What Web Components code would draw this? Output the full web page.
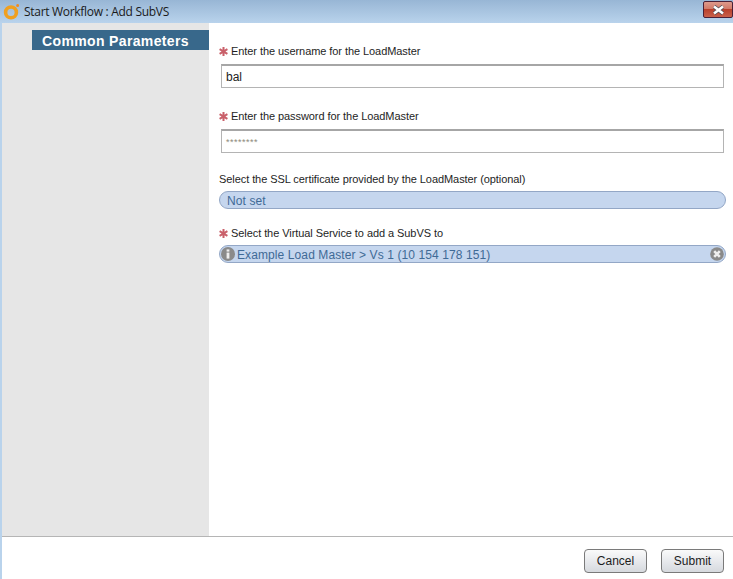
<!DOCTYPE html>
<html>
<head>
<meta charset="utf-8">
<title>Start Workflow : Add SubVS</title>
<style>
  html, body { margin: 0; height: 100%; }
  body { font-family: "Liberation Sans", Arial, sans-serif; overflow: hidden; }
</style>
</head>
<body>
<wf-dialog heading="Start Workflow : Add SubVS">
  <wf-field label="Enter the username for the LoadMaster" required style="height:65px">
    <wf-input value="bal" style="margin-top:1px"></wf-input>
  </wf-field>
  <wf-field label="Enter the password for the LoadMaster" required style="height:63px">
    <wf-input value="********" secret></wf-input>
  </wf-field>
  <wf-field label="Select the SSL certificate provided by the LoadMaster (optional)" style="height:54px">
    <wf-pill text="Not set"></wf-pill>
  </wf-field>
  <wf-field label="Select the Virtual Service to add a SubVS to" required>
    <wf-pill text="Example Load Master &gt; Vs 1 (10 154 178 151)" info clear></wf-pill>
  </wf-field>
</wf-dialog>

<script>
// Title bar of the window, with logo and red close button
class WfTitlebar extends HTMLElement {
  constructor() {
    super();
    this.attachShadow({ mode: 'open' });
  }
  connectedCallback() {
    this.shadowRoot.innerHTML = `
      <style>
        :host {
          display: flex; align-items: center; height: 23px; box-sizing: border-box;
          background: linear-gradient(#98b6d5, #b9d3ec);
          font: 12px "Open Sans", "Noto Sans", sans-serif; color: #1a1a1a;
        }
        svg.logo { margin: 0 0 0 3px; flex: none; }
        span { margin-left: 5px; flex: 1; letter-spacing: -0.3px; }
        .close {
          width: 30px; height: 17px; margin: -4px 0 0 0; box-sizing: border-box;
          border: 1px solid #4a2036; border-radius: 2px;
          background: linear-gradient(#dd9a8c 0, #d27a68 45%, #b8402c 50%, #c9604a 100%);
          display: flex; align-items: center; justify-content: center;
        }
      </style>
      <svg class="logo" width="16" height="16" viewBox="0 0 16 16">
        <circle cx="8" cy="8.4" r="5.4" fill="none" stroke="#f0a020" stroke-width="3.6"/>
        <circle cx="14.6" cy="1.6" r="1.5" fill="#f08a20"/>
      </svg>
      <span>${this.getAttribute('heading')}</span>
      <div class="close">
        <svg width="13" height="10" viewBox="0 0 13 10">
          <path d="M2 1.5L11 8.5M11 1.5L2 8.5" stroke="#4b4b55" stroke-width="4"/>
          <path d="M2 1.5L11 8.5M11 1.5L2 8.5" stroke="#fff" stroke-width="2.6"/>
        </svg>
      </div>`;
  }
}

class WfButton extends HTMLElement {
  constructor() {
    super();
    this.attachShadow({ mode: 'open' });
    this.shadowRoot.innerHTML = `
      <style>
        :host {
          display: flex; align-items: center; justify-content: center;
          width: 63px; height: 24px; box-sizing: border-box;
          border: 1px solid #7a7a7a; border-radius: 4px;
          background: linear-gradient(#fafafa, #e4e6ea 60%, #d6d9de);
          font: 12px "Liberation Sans", sans-serif; color: #1c1c1c;
        }
      </style>
      <slot></slot>`;
  }
}

class WfInput extends HTMLElement {
  constructor() {
    super();
    this.attachShadow({ mode: 'open' });
  }
  connectedCallback() {
    const secret = this.hasAttribute('secret');
    this.shadowRoot.innerHTML = `
      <style>
        :host {
          display: flex; align-items: center; box-sizing: border-box;
          height: 24px; margin: 0 9px 0 2px; padding: 1px 0 0 4px;
          border: 1px solid #b4b4b4; border-top: 2px solid #a6a6a6;
          background: #fff; color: #222;
          font: 12px "Liberation Sans", sans-serif;
        }
        .secret { font-size: 9px; color: #8d8a78; letter-spacing: 0.5px; }
      </style>
      <span class="${secret ? 'secret' : ''}">${this.getAttribute('value')}</span>`;
  }
}

// Selected value as a blue rounded bar
class WfPill extends HTMLElement {
  constructor() {
    super();
    this.attachShadow({ mode: 'open' });
  }
  connectedCallback() {
    const info = this.hasAttribute('info') ? `
      <svg class="info" width="14" height="14" viewBox="0 0 14 14">
        <circle cx="7" cy="7" r="7" fill="#8a8a8a"/>
        <rect x="5.6" y="2.4" width="2.8" height="2.2" fill="#eee"/>
        <rect x="5.6" y="5.6" width="2.8" height="6" fill="#eee"/>
      </svg>` : '';
    const clear = this.hasAttribute('clear') ? `
      <svg class="clear" width="14" height="14" viewBox="0 0 14 14">
        <circle cx="7" cy="7" r="6.8" fill="#8a8a8a"/>
        <path d="M4.2 4.2L9.8 9.8M9.8 4.2L4.2 9.8" stroke="#eee" stroke-width="2.6"/>
      </svg>` : '';
    this.shadowRoot.innerHTML = `
      <style>
        :host {
          display: flex; align-items: center; box-sizing: border-box;
          height: 18px; margin: -1px 7px 0 0; padding: 0 1px 0 7px;
          border: 1px solid #93a7c6; border-radius: 9px;
          background: #c5d6ee; color: #3f6a96;
          font: 12px "Liberation Sans", sans-serif; letter-spacing: 0.1px;
        }
        :host([info]) { padding-left: 1px; }
        .info { margin-right: 2px; flex: none; }
        span { flex: 1; padding-top: 1px; }
        .clear { flex: none; }
      </style>
      ${info}<span>${this.getAttribute('text')}</span>${clear}`;
  }
}

// Label with optional red star above a control
class WfField extends HTMLElement {
  constructor() {
    super();
    this.attachShadow({ mode: 'open' });
  }
  connectedCallback() {
    const star = this.hasAttribute('required') ? `
      <svg width="9" height="9" viewBox="0 0 9 9">
        <path d="M4.5 0V9M0.6 2.2L8.4 6.8M8.4 2.2L0.6 6.8" stroke="#c9606a" stroke-width="2"/>
      </svg>` : '';
    this.shadowRoot.innerHTML = `
      <style>
        :host { display: block; }
        .label {
          display: flex; align-items: center; gap: 3px; height: 14px; margin-bottom: 6px;
          font: 11px "Liberation Sans", sans-serif; color: #1e1e1e; letter-spacing: -0.07px;
        }
        svg { flex: none; }
      </style>
      <div class="label">${star}<span>${this.getAttribute('label')}</span></div>
      <slot></slot>`;
  }
}

class WfDialog extends HTMLElement {
  constructor() {
    super();
    this.attachShadow({ mode: 'open' });
  }
  connectedCallback() {
    this.shadowRoot.innerHTML = `
      <style>
        :host {
          display: flex; flex-direction: column; height: 579px; width: 733px;
          background: #fff; border-left: 2px solid #b9d3ec; box-sizing: border-box;
        }
        wf-titlebar { margin-left: -2px; }
        .body { flex: 1; display: flex; min-height: 0; }
        .side { width: 207px; flex: none; background: #e6e6e6; padding: 7px 0 0 30px; box-sizing: border-box; }
        .side div {
          height: 20px; background: #38688b; color: #fff; padding-left: 10px;
          font: bold 14px/22px "Liberation Sans", sans-serif; letter-spacing: 0.36px;
        }
        .main { flex: 1; padding: 21px 0 0 10px; }
        .foot {
          height: 43px; flex: none; border-top: 1px solid #b5b5b5;
          display: flex; justify-content: flex-end; align-items: flex-start;
          gap: 14px; padding: 12px 9px 0 0; box-sizing: border-box;
        }
      </style>
      <wf-titlebar heading="${this.getAttribute('heading')}"></wf-titlebar>
      <div class="body">
        <div class="side"><div>Common Parameters</div></div>
        <div class="main"><slot></slot></div>
      </div>
      <div class="foot">
        <wf-button>Cancel</wf-button>
        <wf-button>Submit</wf-button>
      </div>`;
  }
}

customElements.define('wf-titlebar', WfTitlebar);
customElements.define('wf-button', WfButton);
customElements.define('wf-input', WfInput);
customElements.define('wf-pill', WfPill);
customElements.define('wf-field', WfField);
customElements.define('wf-dialog', WfDialog);
</script>
</body>
</html>
